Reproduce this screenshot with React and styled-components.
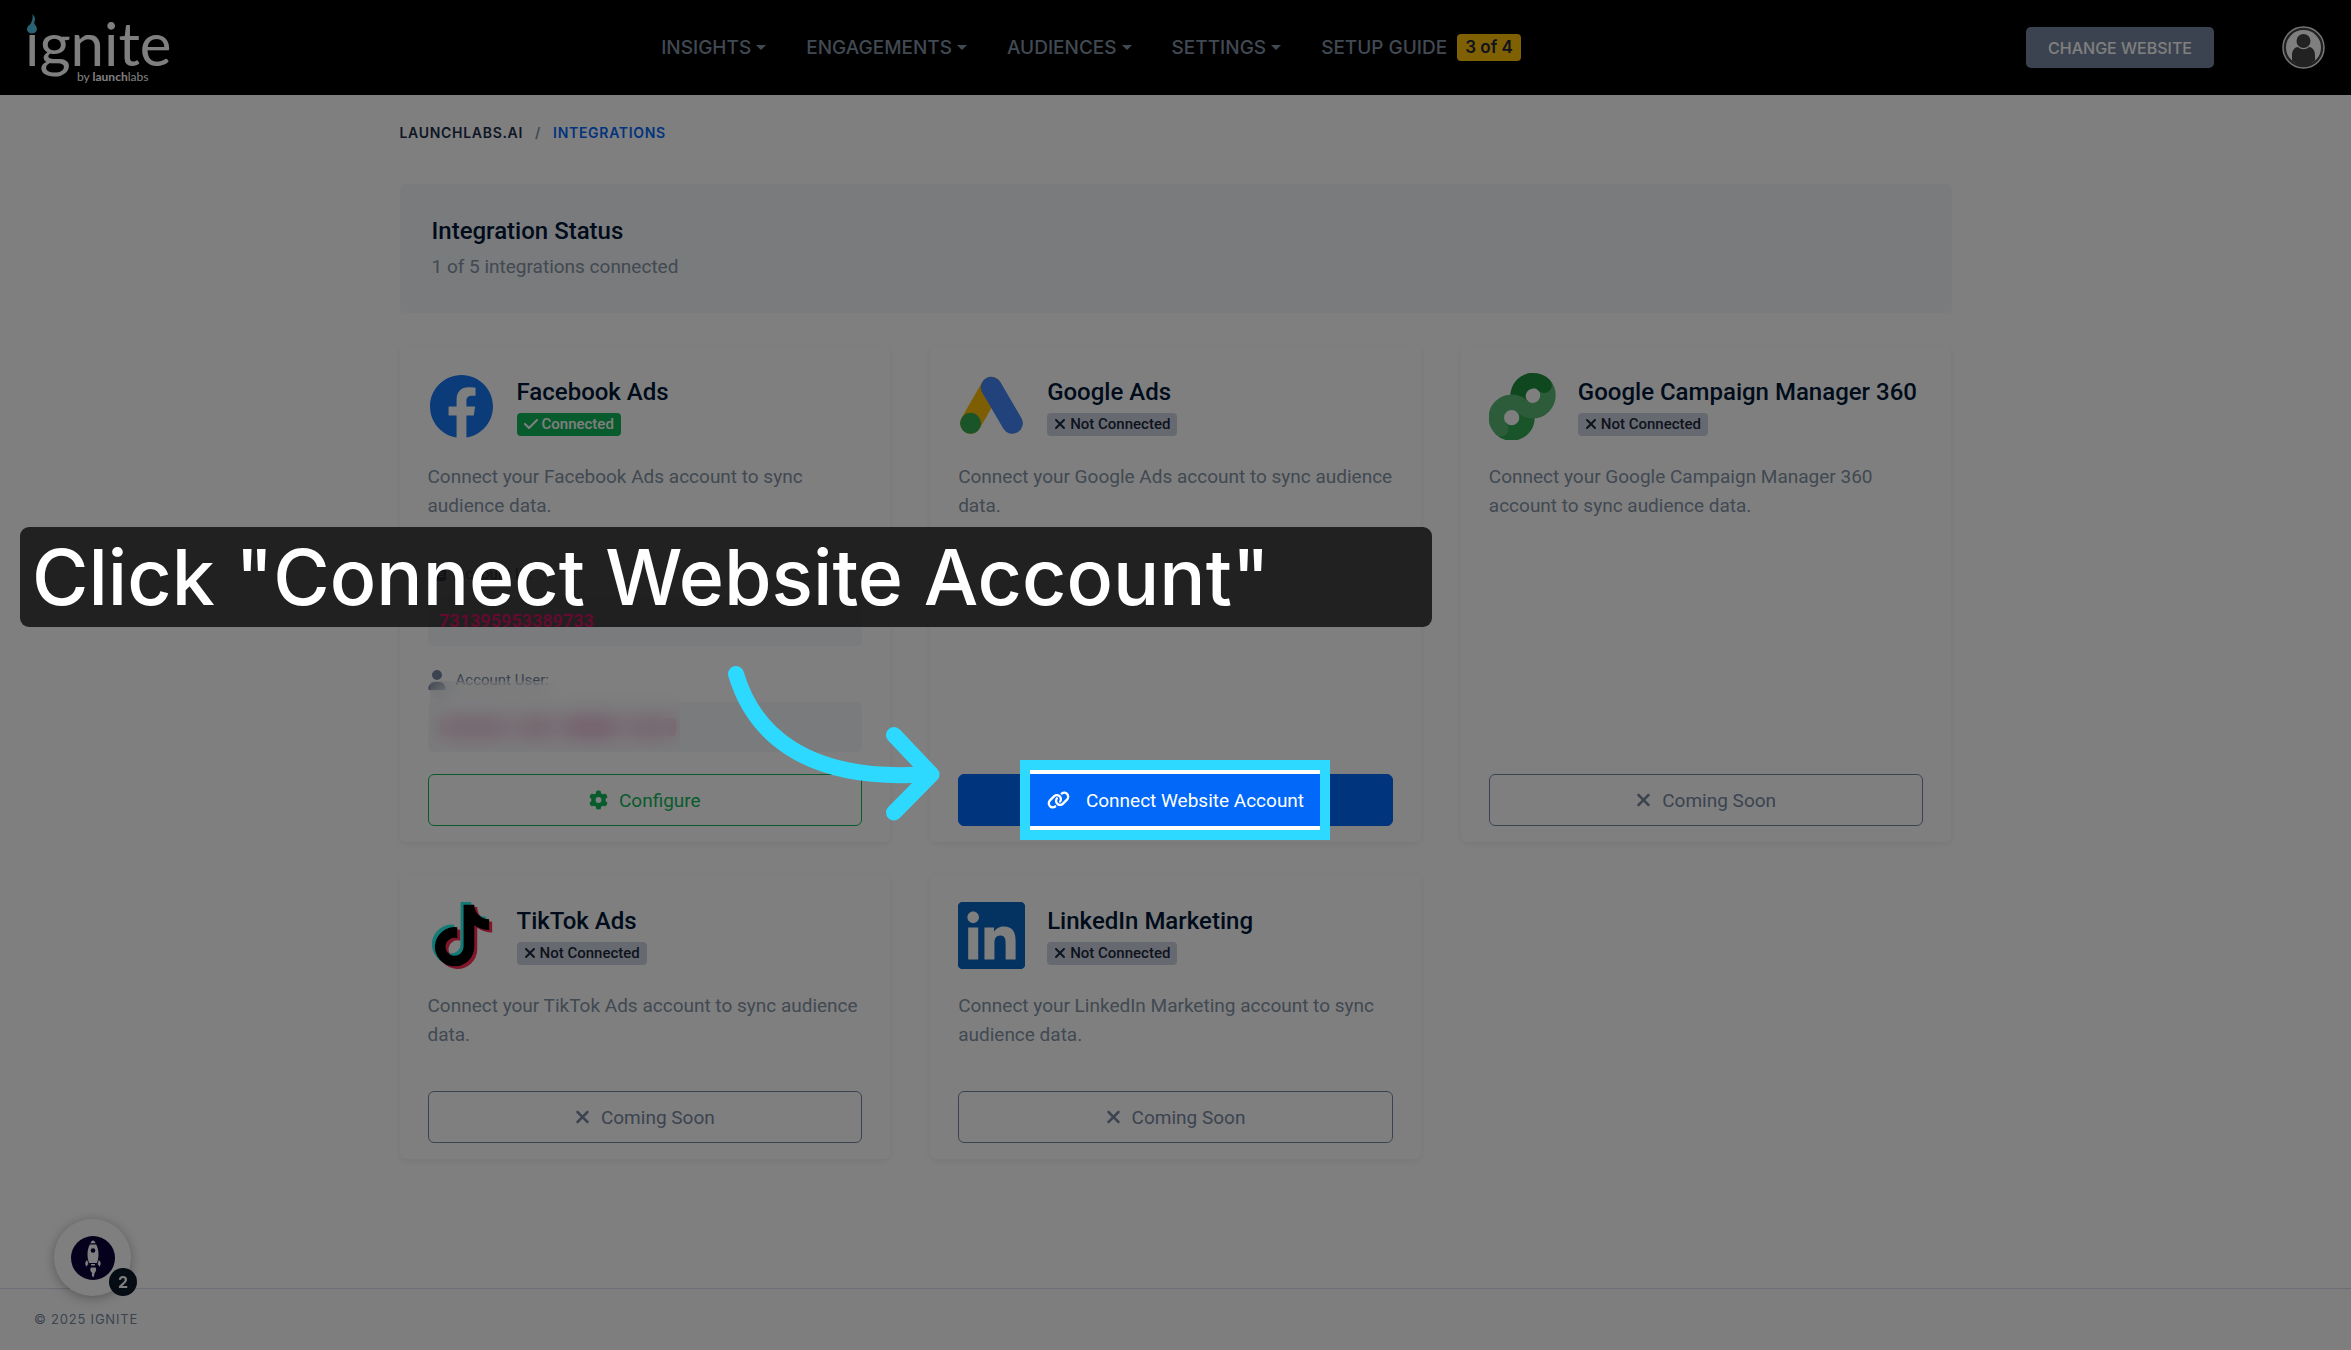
import React from 'react';
import styled, { createGlobalStyle, css } from 'styled-components';
import { FaFacebook, FaTiktok, FaLinkedin } from 'react-icons/fa';
import { FaXmark, FaCheck, FaGear, FaLink, FaUser, FaIdCard } from 'react-icons/fa6';

const colors = {
  ink: '#001737',
  text: '#1b2e4b',
  muted: '#8392a5',
  slate: '#7987a1',
  primary: '#0168fa',
  success: '#10b759',
  warning: '#ffc107',
  panel: '#f5f6fa',
  badge: '#cdd4e0',
  line: '#d8dcea',
  guide: '#2ed9ff',
};

const uiFont = 'Inter, "Liberation Sans", sans-serif';
const bodyFont = 'Roboto, "Liberation Sans", sans-serif';

const GlobalStyle = createGlobalStyle`
  *, *::before, *::after { box-sizing: border-box; }
  body {
    margin: 0;
    background: #fff;
    color: ${colors.text};
    font-family: ${bodyFont};
  }
  h1, h2, p { margin: 0; }
  button { font: inherit; cursor: pointer; }
  a { color: inherit; text-decoration: none; }
`;

const Page = styled.div`
  position: relative;
  display: flex;
  flex-direction: column;
  min-height: 100vh;
`;

/* Header */

const Header = styled.header`
  display: flex;
  align-items: center;
  height: 95px;
  padding: 0 26px 0 20px;
  background: #000;
  font-family: ${uiFont};
`;

const LogoLink = styled.a`
  display: flex;
  svg { display: block; }
`;

const Nav = styled.nav`
  display: flex;
  align-items: center;
  gap: 40px;
  margin: 0 auto;
  padding-right: 20px;
`;

const NavLink = styled.a`
  display: flex;
  align-items: center;
  gap: ${(p) => (p.$wide ? '10px' : '5px')};
  color: ${colors.muted};
  font-size: 19px;
  font-weight: 500;
  line-height: 30px;
`;

const Caret = styled.span`
  border: 5px solid transparent;
  border-top-color: currentColor;
  border-bottom: 0;
`;

const StepBadge = styled.span`
  padding: 0 8px;
  border-radius: 4px;
  background: ${colors.warning};
  color: #1c273c;
  font-size: 17px;
  font-weight: 600;
  line-height: 27px;
`;

const HeaderActions = styled.div`
  display: flex;
  align-items: center;
  gap: 68px;
`;

const ChangeButton = styled.button`
  height: 41px;
  padding: 0 22px;
  border: 0;
  border-radius: 5px;
  background: ${colors.slate};
  color: #fff;
  font-size: 16px;
  font-weight: 500;
`;

const AvatarButton = styled.button`
  display: flex;
  padding: 0;
  border: 0;
  background: none;
`;

/* Main column */

const Main = styled.main`
  flex: 1;
  width: 100%;
  max-width: 1600px;
  margin: 0 auto;
  padding: 27px 24px 80px;
`;

const Breadcrumb = styled.nav`
  display: flex;
  gap: 12px;
  margin-bottom: 40px;
  color: ${colors.muted};
  font: 600 14px/22px ${uiFont};
  letter-spacing: 0.05em;
`;

const Crumb = styled.a`
  color: ${(p) => (p.$current ? colors.primary : colors.text)};
`;

const StatusPanel = styled.section`
  margin-bottom: 32px;
  padding: 32px;
  border-radius: 5px;
  background: ${colors.panel};
`;

const StatusTitle = styled.h1`
  margin-bottom: 6px;
  color: ${colors.ink};
  font-size: 24px;
  font-weight: 500;
  line-height: 30px;
`;

const StatusText = styled.p`
  color: ${colors.muted};
  font-size: 19px;
  line-height: 29px;
`;

const CardGrid = styled.div`
  display: grid;
  grid-template-columns: repeat(3, minmax(0, 1fr));
  gap: 32px 40px;
`;

const Card = styled.article`
  display: flex;
  flex-direction: column;
  padding: 28px 28px 16px;
  border-radius: 6px;
  background: #fff;
  box-shadow: 0 2px 6px rgba(28, 39, 60, 0.08);
`;

const CardHead = styled.div`
  display: flex;
  align-items: center;
  gap: 22px;
  margin-bottom: 22px;
`;

const Brand = styled.div`
  display: flex;
  flex: none;
  align-items: center;
  justify-content: center;
  width: 67px;
  height: 67px;
`;

const CardHeading = styled.div`
  display: flex;
  flex-direction: column;
  align-items: flex-start;
  gap: 6px;
`;

const CardTitle = styled.h2`
  color: ${colors.ink};
  font-size: 24px;
  font-weight: 500;
  line-height: 29px;
  white-space: nowrap;
`;

const StatusBadge = styled.span`
  display: flex;
  align-items: center;
  gap: 4px;
  height: 23px;
  padding: 0 7px;
  border-radius: 4px;
  background: ${(p) => (p.$on ? colors.success : colors.badge)};
  color: ${(p) => (p.$on ? '#fff' : '#1c273c')};
  font-size: 15px;
  font-weight: 500;

  svg {
    width: ${(p) => (p.$on ? '14px' : '12px')};
    height: 16px;
  }
`;

const CardText = styled.p`
  margin-bottom: 42px;
  color: ${colors.muted};
  font-size: 19px;
  line-height: 29px;
`;

const Details = styled.dl`
  display: flex;
  flex-direction: column;
  gap: 22px;
  margin: 0 0 22px;
`;

const Detail = styled.div`
  position: relative;
  display: flex;
  flex-direction: column;
  gap: 10px;
`;

const DetailLabel = styled.dt`
  display: flex;
  align-items: center;
  gap: 10px;
  color: ${colors.slate};
  font-size: 15px;
  line-height: 24px;
  svg { width: 18px; height: 20px; }
`;

const DetailValue = styled.dd`
  display: flex;
  align-items: center;
  height: 50px;
  margin: 0;
  padding: 0 12px;
  border-radius: 5px;
  background: ${colors.panel};
`;

const AccountCode = styled.code`
  position: relative;
  z-index: 30;
  color: #640a2e;
  font: 700 18px/24px ${bodyFont};
`;

const HiddenValue = styled.span`
  display: flex;
  align-items: center;
  gap: 8px;
`;

const HiddenChunk = styled.span`
  width: ${(p) => p.$width};
  height: 18px;
  border-radius: 4px;
  background: #d84a8c;
  opacity: ${(p) => p.$strength};
`;

const PrivacyBlur = styled.div`
  position: absolute;
  top: 13px;
  bottom: 1px;
  left: 2px;
  width: 250px;
  backdrop-filter: blur(10px);
`;

const ActionWrap = styled.div`
  position: relative;
  margin-top: auto;
`;

const tones = {
  success: css`
    border-color: ${colors.success};
    background: transparent;
    color: ${colors.success};
  `,
  primary: css`
    gap: 16px;
    border-color: ${colors.primary};
    background: ${colors.primary};
    color: #fff;
  `,
  muted: css`
    border-color: ${colors.slate};
    background: transparent;
    color: ${colors.slate};
  `,
};

const ActionButton = styled.button`
  display: flex;
  align-items: center;
  justify-content: center;
  gap: 11px;
  width: 100%;
  height: 52px;
  border: 1px solid;
  border-radius: 6px;
  font-size: 19px;
  ${(p) => tones[p.$tone]}

  svg {
    width: ${(p) => ({ success: '19px', primary: '23px', muted: '15px' })[p.$tone]};
    height: 20px;
  }
`;

/* Guided tour layer */

const Spotlight = styled.div`
  position: absolute;
  z-index: 10;
  top: -14px;
  bottom: -14px;
  left: calc(50% - 155px);
  width: 310px;
  border: 10px solid ${colors.guide};
  box-shadow: 0 0 0 4000px rgba(0, 0, 0, 0.5);
  pointer-events: none;
`;

const TourCaption = styled.div`
  position: absolute;
  z-index: 20;
  top: 527px;
  left: 20px;
  width: 1412px;
  padding: 0 12px;
  border-radius: 9px;
  background: rgba(0, 0, 0, 0.74);
  color: #fff;
  font: 500 77px/100px ${uiFont};
  white-space: nowrap;
`;

const TourArrow = styled.svg`
  position: absolute;
  z-index: 20;
  top: 660px;
  left: 720px;
  pointer-events: none;
`;

/* Footer and launcher */

const Footer = styled.footer`
  padding: 0 34px;
  border-top: 1px solid ${colors.line};
  background: #fcfcfd;
  color: ${colors.slate};
  font: 400 13px/61px ${uiFont};
  letter-spacing: 0.06em;
`;

const Launcher = styled.button`
  position: fixed;
  z-index: 5;
  bottom: 54px;
  left: 54px;
  display: flex;
  align-items: center;
  justify-content: center;
  width: 77px;
  height: 77px;
  padding: 0;
  border: 0;
  border-radius: 50%;
  background: #fff;
  box-shadow: 0 2px 12px rgba(0, 0, 0, 0.3);
`;

const LauncherCount = styled.span`
  position: absolute;
  right: -6px;
  bottom: 0;
  width: 28px;
  height: 28px;
  border-radius: 50%;
  background: #0c1828;
  color: #fff;
  font: 700 16px/28px ${uiFont};
  text-align: center;
`;

/* Drawings */

const IgniteLogo = () => (
  <svg width="156" height="90" viewBox="20 2 156 90" role="img" aria-label="ignite by launchlabs">
    <text x="25" y="65" fill="#fff" fontFamily="Lato, sans-serif" fontSize="60">ignite</text>
    <rect x="26" y="12" width="13" height="20" fill="#000" />
    <path d="M32.5 13c2.6 2.6 3 5 2 7.6-.6 1.9.2 2.8 1.3 4.2 2.6 3.4.6 7.7-3.8 7.7-4.6 0-6.3-4.2-4-7.2 1-1.4 1.9-1 3-3.3 1.5-3.2 1.9-5.4 1.5-9z" fill="#55c3e6" />
    <text x="77" y="80" fill="#fff" fontFamily="Lato, sans-serif" fontSize="12">
      by <tspan fontWeight="700">launch</tspan>labs
    </text>
  </svg>
);

const Avatar = () => (
  <svg width="43" height="43" viewBox="0 0 43 43" aria-hidden="true">
    <defs>
      <clipPath id="avatar-face"><circle cx="21.5" cy="21.5" r="17.5" /></clipPath>
    </defs>
    <circle cx="21.5" cy="21.5" r="20.5" fill="#444" stroke="#eee" strokeWidth="1.5" />
    <circle cx="21.5" cy="21.5" r="17.5" fill="#fff" />
    <g clipPath="url(#avatar-face)" fill="#444">
      <circle cx="21.5" cy="15" r="7" />
      <path d="M10 42V29c0-5 3-8 6-8 3.5 3 7.5 3 11 0 3 0 6 3 6 8v13z" />
    </g>
    <path d="M13 36h17l-3 4H16z" fill="#444" />
  </svg>
);

const GoogleAdsLogo = () => (
  <svg width="67" height="67" viewBox="0 0 67 67" aria-hidden="true">
    <g fill="none" strokeWidth="21" strokeLinecap="round">
      <path d="M33.3 14.3 12.6 50.3" stroke="#fbbc04" />
      <path d="M33.3 14.3 54.3 50.3" stroke="#4285f4" />
    </g>
    <circle cx="12.6" cy="50.3" r="10.5" fill="#34a853" />
  </svg>
);

const CampaignManagerLogo = () => (
  <svg width="67" height="67" viewBox="0 0 67 67" aria-hidden="true">
    <g fill="none" strokeWidth="15.5">
      <path d="M33.5 33.8A15.3 15.3 0 0 1 44.3 7.7" stroke="#1e8e3e" />
      <path d="M33.5 33.8A15.3 15.3 0 1 1 11.8 55.5" stroke="#34a853" />
      <path d="M11.8 55.5A15.3 15.3 0 0 1 33.5 33.8A15.3 15.3 0 0 0 55.1 12.2" stroke="#5bb974" strokeLinecap="round" />
      <path d="M38 9.1A15.3 15.3 0 0 1 55.1 12.2" stroke="#1e8e3e" strokeLinecap="round" />
    </g>
  </svg>
);

const TikTokLogo = () => (
  <svg width="67" height="67" viewBox="0 0 67 67" aria-hidden="true">
    <FaTiktok x="0" y="0" size={62} color="#25f4ee" />
    <FaTiktok x="6" y="5" size={62} color="#fe2c55" />
    <FaTiktok x="3" y="2.5" size={62} color="#000" />
  </svg>
);

const LinkedInLogo = () => (
  <svg width="67" height="67" viewBox="0 0 67 67" aria-hidden="true">
    <FaLinkedin x="-5" y="-5" size={77} color="#0a66c2" />
  </svg>
);

const Rocket = () => (
  <svg width="44" height="44" viewBox="0 0 44 44" aria-hidden="true">
    <circle cx="22" cy="22" r="22" fill="#0a0038" />
    <g fill="#fff">
      <path d="M22 4.5c1.3 0 2.2 1.5 2.5 2.8h-5c.3-1.3 1.2-2.8 2.5-2.8z" />
      <path d="M18.8 8.5h6.4c2.8 5.5 3 12 .8 18.5h-8c-2.2-6.5-2-13 .8-18.5z" />
      <path d="M16.3 24c.2 1.6.6 3 1.2 4.3-1.2.4-1.5 1.3-1.9 2.5-1.7-2.3-1.8-5.3.7-6.8zM27.7 24c-.2 1.6-.6 3-1.2 4.3 1.2.4 1.5 1.3 1.9 2.5 1.7-2.3 1.8-5.3-.7-6.8z" />
      <path d="M20 28h4v1.5h-4z" />
      <path d="M19.8 31.5h4.8c1 2.2.5 3.5-.4 4.5-.8 1.2-.6 2.6-1.8 5.5-1.6-1.2-2-2.5-1.2-4.5-1.8-1.2-2.4-3-1.4-5.5z" />
    </g>
    <circle cx="22" cy="14.5" r="2.3" fill="#0a0038" />
  </svg>
);

/* Data */

const menu = ['INSIGHTS', 'ENGAGEMENTS', 'AUDIENCES', 'SETTINGS'];

const integrations = [
  { name: 'Facebook Ads', logo: <FaFacebook size={65} color="#1877f2" />, action: 'configure' },
  { name: 'Google Ads', logo: <GoogleAdsLogo />, action: 'connect' },
  { name: 'Google Campaign Manager 360', logo: <CampaignManagerLogo />, action: 'soon' },
  { name: 'TikTok Ads', logo: <TikTokLogo />, action: 'soon' },
  { name: 'LinkedIn Marketing', logo: <LinkedInLogo />, action: 'soon' },
];

const actions = {
  configure: { tone: 'success', icon: <FaGear />, label: 'Configure' },
  connect: { tone: 'primary', icon: <FaLink />, label: 'Connect Website Account' },
  soon: { tone: 'muted', icon: <FaXmark />, label: 'Coming Soon' },
};

const AccountDetails = () => (
  <Details>
    <Detail>
      <DetailLabel><FaIdCard />Account ID:</DetailLabel>
      <DetailValue><AccountCode>731395953389733</AccountCode></DetailValue>
    </Detail>
    <Detail>
      <DetailLabel><FaUser />Account User:</DetailLabel>
      <DetailValue>
        <HiddenValue aria-label="Hidden">
          <HiddenChunk $width="68px" $strength={0.3} />
          <HiddenChunk $width="40px" $strength={0.3} />
          <HiddenChunk $width="54px" $strength={0.4} />
          <HiddenChunk $width="50px" $strength={0.3} />
        </HiddenValue>
      </DetailValue>
      <PrivacyBlur />
    </Detail>
  </Details>
);

const IntegrationCard = ({ name, logo, action }) => {
  const { tone, icon, label } = actions[action];
  const connected = action === 'configure';
  return (
    <Card>
      <CardHead>
        <Brand>{logo}</Brand>
        <CardHeading>
          <CardTitle>{name}</CardTitle>
          <StatusBadge $on={connected}>
            {connected ? <FaCheck /> : <FaXmark />}
            {connected ? 'Connected' : 'Not Connected'}
          </StatusBadge>
        </CardHeading>
      </CardHead>
      <CardText>Connect your {name} account to sync audience data.</CardText>
      {connected && <AccountDetails />}
      <ActionWrap>
        <ActionButton type="button" $tone={tone}>{icon}{label}</ActionButton>
        {action === 'connect' && <Spotlight />}
      </ActionWrap>
    </Card>
  );
};

export default function App() {
  return (
    <Page>
      <GlobalStyle />
      <Header>
        <LogoLink href="#home"><IgniteLogo /></LogoLink>
        <Nav aria-label="Main">
          {menu.map((item) => (
            <NavLink key={item} href={`#${item.toLowerCase()}`}>{item}<Caret /></NavLink>
          ))}
          <NavLink href="#setup" $wide>SETUP GUIDE<StepBadge>3 of 4</StepBadge></NavLink>
        </Nav>
        <HeaderActions>
          <ChangeButton type="button">CHANGE WEBSITE</ChangeButton>
          <AvatarButton type="button" aria-label="Account"><Avatar /></AvatarButton>
        </HeaderActions>
      </Header>

      <Main>
        <Breadcrumb aria-label="Breadcrumb">
          <Crumb href="#launchlabs">LAUNCHLABS.AI</Crumb>
          <span>/</span>
          <Crumb href="#integrations" $current>INTEGRATIONS</Crumb>
        </Breadcrumb>
        <StatusPanel>
          <StatusTitle>Integration Status</StatusTitle>
          <StatusText>1 of 5 integrations connected</StatusText>
        </StatusPanel>
        <CardGrid>
          {integrations.map((item) => <IntegrationCard key={item.name} {...item} />)}
        </CardGrid>
      </Main>

      <Footer>© 2025 IGNITE</Footer>

      <Launcher type="button" aria-label="Open checklist">
        <Rocket />
        <LauncherCount>2</LauncherCount>
      </Launcher>

      <TourCaption>Click "Connect Website Account"</TourCaption>
      <TourArrow width="230" height="170" viewBox="720 660 230 170" aria-hidden="true">
        <g fill="none" stroke={colors.guide} strokeWidth="16" strokeLinecap="round" strokeLinejoin="round">
          <path d="M736 674C752 728 800 784 930 774" />
          <path d="M894 735 931.5 774.5 894 812.5" />
        </g>
      </TourArrow>
    </Page>
  );
}
